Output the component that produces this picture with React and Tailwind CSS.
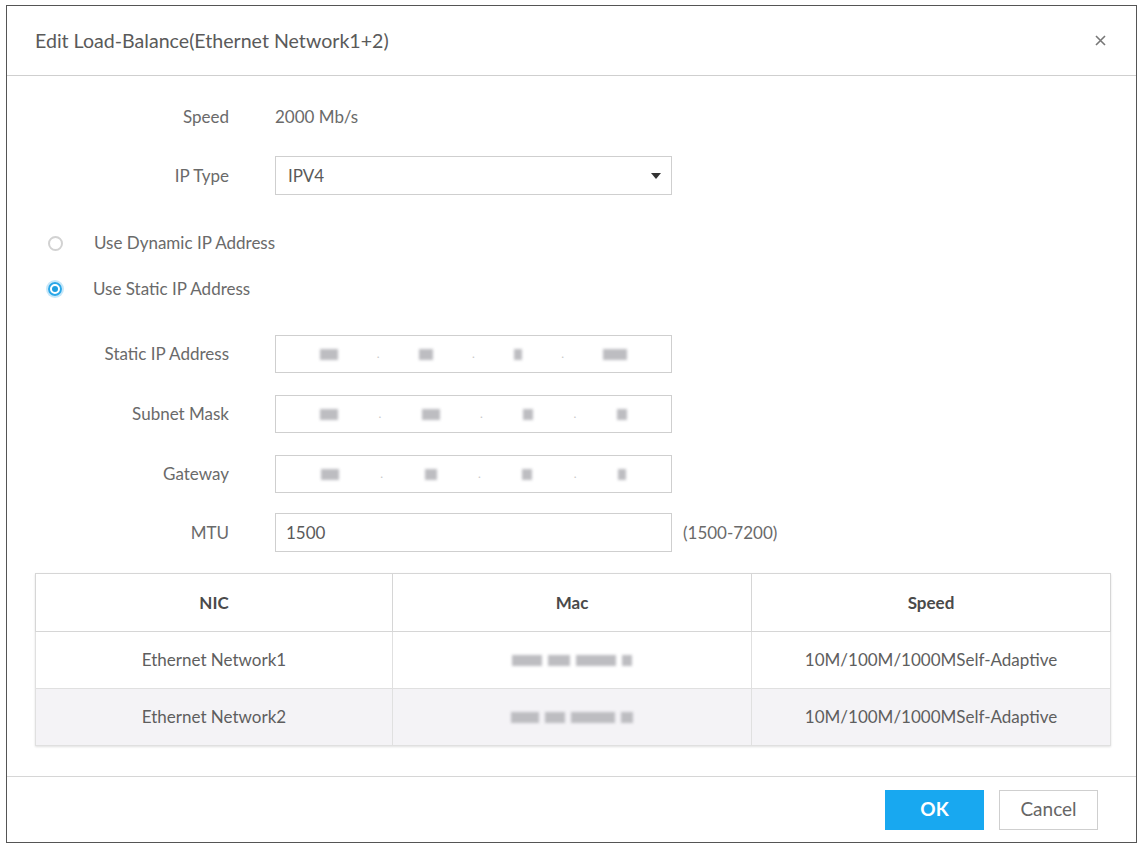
import React from 'react';

const font = { fontFamily: 'Lato, "Open Sans", sans-serif' };

const Blob = ({ w }) => (
    <span className={`inline-block h-[11px] bg-[#bdbdc1] blur-[1.5px] ${w}`}></span>
);

const IpInput = ({ parts }) => (
    <div className="w-[397px] h-[38px] border border-[#cfcfcf] bg-white flex items-center justify-around px-6">
        {parts.map((p, i) => (
            <React.Fragment key={i}>
                <Blob w={p} />
                {i < parts.length - 1 && <span className="text-[#c8c8c8] text-xs">.</span>}
            </React.Fragment>
        ))}
    </div>
);

const Row = ({ label, children, className = '' }) => (
    <div className={`flex items-center ${className}`}>
        <div className="w-[194px] text-right text-[17px] leading-[20px] text-[#6a6a6a]">{label}</div>
        <div className="ml-[46px] flex items-center">{children}</div>
    </div>
);

const Radio = ({ checked, label, className = '' }) => (
    <div className={`flex items-center ${className}`}>
        {checked ? (
            <span className="w-[14px] h-[14px] rounded-full border-2 border-[#2aa7e8] ring-2 ring-[#c6e7f9] flex items-center justify-center">
                <span className="w-[6px] h-[6px] rounded-full bg-[#1e9ee0]"></span>
            </span>
        ) : (
            <span className="w-[15px] h-[15px] rounded-full border-2 border-[#d2d2d2]"></span>
        )}
        <span className="ml-[31px] text-[17px] leading-[20px] text-[#6a6a6a]">{label}</span>
    </div>
);

export default function App() {
    const rows = [
        { nic: 'Ethernet Network1', mac: ['w-[30px]', 'w-[22px]', 'w-[40px]', 'w-[10px]'], bg: 'bg-white' },
        { nic: 'Ethernet Network2', mac: ['w-[28px]', 'w-[20px]', 'w-[44px]', 'w-[12px]'], bg: 'bg-[#f4f3f6]' },
    ];

    return (
        <div className="w-[1139px] h-[845px] bg-white pt-[5px] pl-[6px]" style={font}>
            <div className="w-[1131px] h-[838px] border border-[#555] bg-white flex flex-col">
                <div className="h-[70px] flex items-center justify-between pl-[28px] pr-[30px] border-b border-[#cfcfcf] shrink-0">
                    <span className="text-[19.6px] text-[#5a5a5a]">Edit Load-Balance(Ethernet Network1+2)</span>
                    <svg width="11" height="11" viewBox="0 0 11 11" className="text-[#777]">
                        <path d="M1 1L10 10M10 1L1 10" stroke="currentColor" strokeWidth="1.6" />
                    </svg>
                </div>

                <div className="flex-1 pl-[28px] pr-[25px]">
                    <Row label="Speed" className="mt-[31px] h-[20px]">
                        <span className="text-[17px] leading-[20px] text-[#6a6a6a]">2000 Mb/s</span>
                    </Row>
                    <Row label="IP Type" className="mt-[29px]">
                        <div className="w-[397px] h-[39px] border border-[#cfcfcf] flex items-center justify-between pl-[12px] pr-[10px]">
                            <span className="text-[17px] text-[#5a5a5a]">IPV4</span>
                            <svg width="10" height="6" viewBox="0 0 10 6">
                                <path d="M0 0H10L5 6Z" fill="#333" />
                            </svg>
                        </div>
                    </Row>

                    <Radio label="Use Dynamic IP Address" className="mt-[38px] pl-[13px] h-[20px]" />
                    <Radio checked label="Use Static IP Address" className="mt-[26px] pl-[13px] h-[20px]" />

                    <Row label="Static IP Address" className="mt-[36px]">
                        <IpInput parts={['w-[18px]', 'w-[14px]', 'w-[8px]', 'w-[24px]']} />
                    </Row>
                    <Row label="Subnet Mask" className="mt-[22px]">
                        <IpInput parts={['w-[18px]', 'w-[18px]', 'w-[10px]', 'w-[10px]']} />
                    </Row>
                    <Row label="Gateway" className="mt-[22px]">
                        <IpInput parts={['w-[18px]', 'w-[12px]', 'w-[10px]', 'w-[8px]']} />
                    </Row>
                    <Row label="MTU" className="mt-[20px]">
                        <div className="w-[397px] h-[39px] border border-[#cfcfcf] flex items-center pl-[10px]">
                            <span className="text-[17px] text-[#5a5a5a]">1500</span>
                        </div>
                        <span className="ml-[11px] text-[17px] text-[#6a6a6a]">(1500-7200)</span>
                    </Row>

                    <table className="mt-[21px] w-[1076px] border-collapse border border-[#d6d6d6] text-[17px] shadow-[0_1px_2px_rgba(0,0,0,0.12)]">
                        <thead>
                            <tr className="h-[58px]">
                                <th className="w-[357px] border border-[#d6d6d6] font-bold text-[#4a4a4a]">NIC</th>
                                <th className="w-[359px] border border-[#d6d6d6] font-bold text-[#4a4a4a]">Mac</th>
                                <th className="border border-[#d6d6d6] font-bold text-[#4a4a4a]">Speed</th>
                            </tr>
                        </thead>
                        <tbody>
                            {rows.map((r) => (
                                <tr key={r.nic} className={`h-[57px] ${r.bg}`}>
                                    <td className="border border-[#e0e0e0] text-center text-[#5e5e5e]">{r.nic}</td>
                                    <td className="border border-[#e0e0e0] text-center">
                                        <div className="flex justify-center gap-[6px]">
                                            {r.mac.map((m, i) => <Blob key={i} w={m} />)}
                                        </div>
                                    </td>
                                    <td className="border border-[#e0e0e0] text-center text-[#5e5e5e]">10M/100M/1000MSelf-Adaptive</td>
                                </tr>
                            ))}
                        </tbody>
                    </table>
                </div>

                <div className="h-[66px] border-t border-[#d6d6d6] flex items-center justify-end gap-[15px] pr-[38px] shrink-0">
                    <button className="w-[99px] h-[40px] bg-[#18a8f0] text-white text-[19px] font-bold">OK</button>
                    <button className="w-[99px] h-[40px] border border-[#cfcfcf] bg-white text-[#666] text-[19px]">Cancel</button>
                </div>
            </div>
        </div>
    );
}
